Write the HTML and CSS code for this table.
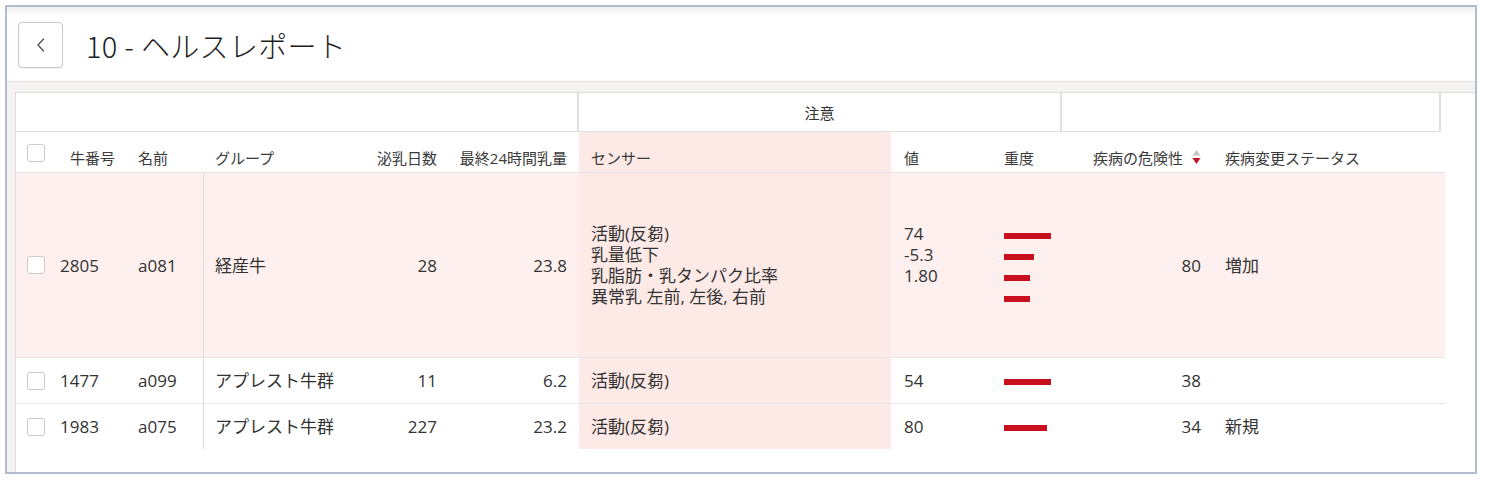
FILE: index.html
```html
<!DOCTYPE html>
<html lang="ja">
<head>
<meta charset="utf-8">
<title>10 - ヘルスレポート</title>
<link rel="stylesheet" href="styles.css">
</head>
<body>
<div class="frame">
  <header class="topbar">
    <button class="back" type="button" aria-label="戻る">
      <svg width="10" height="14" viewBox="0 0 10 14"><polyline points="7.5,1 2,7 7.5,13" fill="none" stroke="#555" stroke-width="1.4" stroke-linecap="round" stroke-linejoin="round"/></svg>
    </button>
    <h1 class="title">10 - ヘルスレポート</h1>
  </header>
  <main class="content">
    <section class="panel">
      <div class="group-row">
        <div class="gcell g-a"></div>
        <div class="gcell g-b">注意</div>
        <div class="gcell g-c"></div>
      </div>

      <div class="grid head">
        <div class="c c-cb"><span class="cb"></span></div>
        <div class="c c-num">牛番号</div>
        <div class="c c-name">名前</div>
        <div class="c c-group">グループ</div>
        <div class="c c-days">泌乳日数</div>
        <div class="c c-milk">最終24時間乳量</div>
        <div class="c c-sensor">センサー</div>
        <div class="c c-val">値</div>
        <div class="c c-sev">重度</div>
        <div class="c c-risk">疾病の危険性
          <svg class="sort" width="9" height="16" viewBox="0 0 9 16"><polygon points="0.5,6.5 4.5,1 8.5,6.5" fill="#c4c4c4"/><polygon points="0.5,9 8.5,9 4.5,15" fill="#c8101e"/></svg>
        </div>
        <div class="c c-status">疾病変更ステータス</div>
      </div>

      <div class="grid row alert tall">
        <div class="c c-cb"><span class="cb"></span></div>
        <div class="c c-num">2805</div>
        <div class="c c-name">a081</div>
        <div class="c c-group">経産牛</div>
        <div class="c c-days">28</div>
        <div class="c c-milk">23.8</div>
        <div class="c c-sensor">
          <ul class="lines">
            <li>活動(反芻)</li>
            <li>乳量低下</li>
            <li>乳脂肪・乳タンパク比率</li>
            <li>異常乳 左前, 左後, 右前</li>
          </ul>
        </div>
        <div class="c c-val">
          <ul class="lines">
            <li>74</li>
            <li>-5.3</li>
            <li>1.80</li>
          </ul>
        </div>
        <div class="c c-sev">
          <ul class="lines">
            <li><span class="bar" style="width:47px"></span></li>
            <li><span class="bar" style="width:30px"></span></li>
            <li><span class="bar" style="width:26px"></span></li>
            <li><span class="bar" style="width:26px"></span></li>
          </ul>
        </div>
        <div class="c c-risk">80</div>
        <div class="c c-status">増加</div>
      </div>

      <div class="grid row">
        <div class="c c-cb"><span class="cb"></span></div>
        <div class="c c-num">1477</div>
        <div class="c c-name">a099</div>
        <div class="c c-group">アプレスト牛群</div>
        <div class="c c-days">11</div>
        <div class="c c-milk">6.2</div>
        <div class="c c-sensor">活動(反芻)</div>
        <div class="c c-val">54</div>
        <div class="c c-sev"><span class="bar" style="width:47px"></span></div>
        <div class="c c-risk">38</div>
        <div class="c c-status"></div>
      </div>

      <div class="grid row last">
        <div class="c c-cb"><span class="cb"></span></div>
        <div class="c c-num">1983</div>
        <div class="c c-name">a075</div>
        <div class="c c-group">アプレスト牛群</div>
        <div class="c c-days">227</div>
        <div class="c c-milk">23.2</div>
        <div class="c c-sensor">活動(反芻)</div>
        <div class="c c-val">80</div>
        <div class="c c-sev"><span class="bar" style="width:43px"></span></div>
        <div class="c c-risk">34</div>
        <div class="c c-status">新規</div>
      </div>
    </section>
  </main>
</div>
</body>
</html>
```

FILE: styles.css
```css
* { box-sizing: border-box; }

html, body {
  margin: 0;
  padding: 0;
  background: #fff;
}

body {
  padding: 5px 0 0 5px;
  font-family: "Open Sans", "Noto Sans CJK JP", sans-serif;
  color: #333;
}

.frame {
  width: 1472px;
  height: 469px;
  border: 2px solid #b1bccf;
  display: flex;
  flex-direction: column;
  overflow: hidden;
}

/* ---------- top bar ---------- */
.topbar {
  height: 75px;
  flex: none;
  display: flex;
  align-items: center;
  gap: 23px;
  padding: 2px 0 0 11px;
  border-bottom: 1px solid #e3dfdd;
  background: linear-gradient(#efefef 0, #fafafa 5px, #fff 9px);
}

.back {
  width: 45px;
  height: 46px;
  padding: 0;
  margin: 0;
  border: 1px solid #c9c9c9;
  border-radius: 4px;
  background: #fff;
  display: flex;
  align-items: center;
  justify-content: center;
  box-shadow: 0 1px 1px rgba(0,0,0,0.06);
}

.title {
  margin: 0;
  font-family: "Noto Sans CJK JP", sans-serif;
  font-weight: 300;
  font-size: 29px;
  line-height: 36px;
  color: #1e1e1e;
  letter-spacing: 0.3px;
}

/* ---------- content ---------- */
.content {
  flex: 1;
  background: #f5f3f2;
  padding: 10px 0 0 8px;
  display: flex;
}

.panel {
  flex: 1;
  background: #fff;
  border-top: 1px solid #dedede;
  border-left: 1px solid #dcdcdc;
}

.group-row {
  display: flex;
  width: 1425px;
  height: 39px;
  border-bottom: 1px solid #dedede;
}

.gcell {
  border-right: 2px solid #e0e0e0;
  display: flex;
  align-items: center;
  justify-content: center;
  font-size: 15px;
  color: #333;
}
.g-a { width: 563px; }
.g-b { width: 483px; padding-top: 1px; }
.g-c { width: 379px; }

/* ---------- table grid ---------- */
.grid {
  display: grid;
  grid-template-columns: 39px 75px 73px 142px 104px 130px 312px 101px 88px 133px 232px;
  width: 1429px;
}

.c {
  display: flex;
  align-items: center;
  white-space: nowrap;
}

.head {
  height: 41px;
  border-bottom: 1px solid #e4e4e4;
  font-size: 15px;
  color: #3a3a3a;
}
.head .c {
  align-items: flex-end;
  padding-bottom: 4px;
  line-height: 20px;
}
.head .c-cb {
  align-items: flex-start;
  padding-top: 12px;
  padding-bottom: 0;
}
.head .c-num { padding-left: 15px; }
.head .c-risk { justify-content: flex-start; padding-left: 13px; }
.sort { margin-left: 9px; margin-bottom: 3px; }

.row {
  height: 46px;
  border-bottom: 1px solid #e8e8e8;
  font-size: 17px;
  line-height: 21px;
}
.row.tall { height: 185px; }
.row.last { border-bottom-color: transparent; }
.alert { background: #fef0ef; }

.c-cb { padding-left: 11px; }
.c-num { padding-left: 5px; }
.c-name { padding-left: 8px; }
.c-group { padding-left: 12px; }
.row .c-group { border-left: 1px solid #dcdcdc; padding-left: 11px; }
.c-days { justify-content: flex-end; padding-right: 12px; }
.c-milk { justify-content: flex-end; padding-right: 12px; }
.c-sensor { padding-left: 12px; background: #fdeae7; }
.c-val { padding-left: 13px; }
.c-sev { padding-left: 12px; }
.c-risk { justify-content: flex-end; padding-right: 12px; }
.c-status { padding-left: 12px; }

.cb {
  display: block;
  width: 18px;
  height: 18px;
  border: 1px solid #cacaca;
  border-radius: 3px;
  background: #fff;
}

.lines {
  list-style: none;
  margin: 0;
  padding: 0;
  min-height: 84px;
}
.lines li {
  height: 21px;
  line-height: 21px;
}
.c-sev .lines li { padding-top: 10px; }

.bar {
  display: block;
  height: 6px;
  background: #c8101e;
}
.row:not(.tall) .c-sev { padding-top: 2px; }
```
